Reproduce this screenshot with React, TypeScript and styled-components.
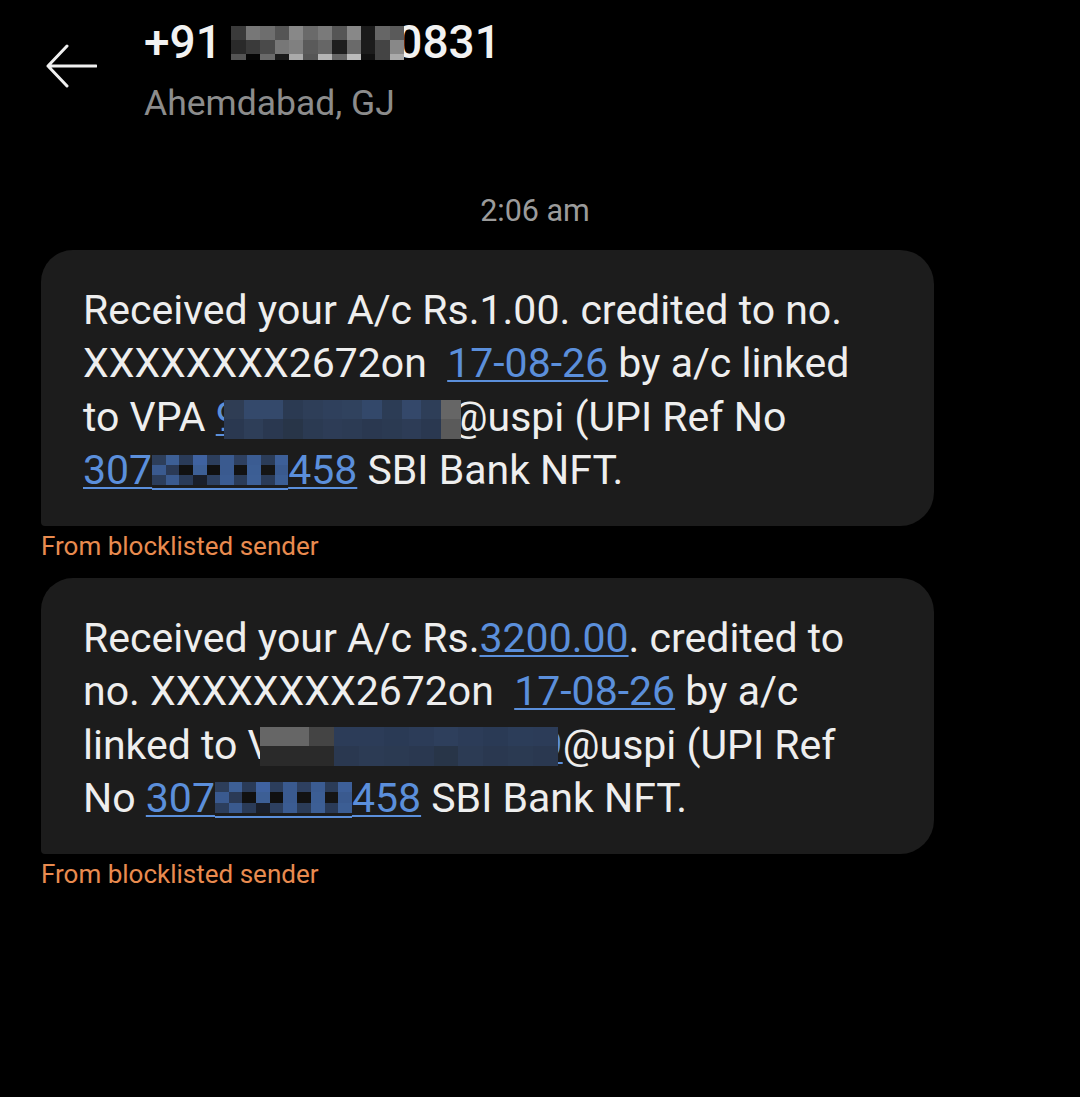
import React from "react";
import styled, { createGlobalStyle } from "styled-components";

const Global = createGlobalStyle`
  html, body { margin: 0; padding: 0; background: #000; }
  body { font-family: Roboto, "Noto Sans", "Liberation Sans", sans-serif; color: #eeeeee; }
  #root { min-height: 1097px; background: #000; }
`;

const Page = styled.div`
  width: 1080px;
  min-height: 1097px;
  background: #000;
  display: flex;
  flex-direction: column;
`;

const Header = styled.header`
  display: flex;
  align-items: flex-start;
  padding: 14px 0 0 45px;
  gap: 47px;
`;

const BackButton = styled.button`
  margin-top: 30px;
  width: 52px;
  height: 44px;
  padding: 0;
  border: 0;
  background: transparent;
  display: flex;
  align-items: center;
  justify-content: center;
  cursor: pointer;
`;

const Titles = styled.div`
  display: flex;
  flex-direction: column;
`;

const Title = styled.div`
  font-size: 46px;
  font-weight: 500;
  line-height: 56px;
  color: #f2f2f2;
  white-space: nowrap;
`;

const Subtitle = styled.div`
  margin-top: 8px;
  font-size: 35.5px;
  line-height: 50px;
  color: #8c8c8c;
`;

const Timestamp = styled.div`
  margin-top: 65px;
  text-align: center;
  font-size: 30.5px;
  line-height: 36px;
  color: #9b9b9b;
  padding-right: 10px;
`;

const Thread = styled.div`
  display: flex;
  flex-direction: column;
  padding-left: 41px;
  margin-top: 21px;
`;

const Bubble = styled.div`
  width: 893px;
  box-sizing: border-box;
  background: #1c1c1c;
  border-radius: 32px 34px 34px 4px;
  padding: 33.5px 30px 28.5px 42px;
  font-size: 41px;
  line-height: 53.5px;
  color: #eeeeee;
`;

const Line = styled.div`
  white-space: nowrap;
`;

const Link = styled.span`
  color: #5b8fdb;
  text-decoration: underline;
  text-decoration-thickness: 2px;
  text-underline-offset: 3px;
`;

const Note = styled.div`
  font-size: 26px;
  line-height: 40px;
  color: #e98b4f;
  margin-bottom: 12px;
`;

const MosaicBox = styled.span<{ $w: number; $h: number; $va: number; $ml: number; $mr: number; $ul?: boolean }>`
  display: inline-block;
  position: relative;
  z-index: 1;
  width: ${(p) => p.$w}px;
  height: ${(p) => p.$h}px;
  margin-left: ${(p) => p.$ml}px;
  margin-right: ${(p) => p.$mr}px;
  vertical-align: ${(p) => p.$va}px;
  ${(p) =>
    p.$ul
      ? `&::after {
    content: "";
    position: absolute;
    left: 0;
    right: 0;
    bottom: -5px;
    height: 2px;
    background: #5b8fdb;
  }`
      : ""}
`;

const MosaicGrid = styled.span<{ $cols: number; $rows: string }>`
  position: absolute;
  inset: 0;
  display: grid;
  grid-template-columns: repeat(${(p) => p.$cols}, 1fr);
  grid-template-rows: ${(p) => p.$rows};
`;

const Cell = styled.span<{ $c: string }>`
  background: ${(p) => p.$c};
`;

type MosaicProps = {
  w: number;
  h: number;
  rows: string;
  colors: string[][];
  va?: number;
  ml?: number;
  mr?: number;
  ul?: boolean;
};

const Mosaic = ({ w, h, rows, colors, va = 0, ml = 0, mr = 0, ul }: MosaicProps) => (
  <MosaicBox $w={w} $h={h} $va={va} $ml={ml} $mr={mr} $ul={ul}>
    <MosaicGrid $cols={colors[0].length} $rows={rows}>
      {colors.flatMap((r, i) => r.map((c, j) => <Cell key={`${i}-${j}`} $c={c} />))}
    </MosaicGrid>
  </MosaicBox>
);

const headerMosaic = [
  ["#3a3a3a", "#777777", "#6e6e6e", "#555555", "#888888", "#6a6a6a", "#7a7a7a", "#555555", "#888888", "#1a1a1a", "#666666", "#5a5a5a"],
  ["#2a2a2a", "#3a3a3a", "#4a4a4a", "#777777", "#808080", "#5a5a5a", "#666666", "#1e1e1e", "#6a6a6a", "#1c1c1c", "#444444", "#888888"],
  ["#555555", "#050505", "#6a6a6a", "#1a1a1a", "#aaaaaa", "#555555", "#b5b5b5", "#666666", "#bbbbbb", "#111111", "#444444", "#aaaaaa"],
];

const vpaMosaic1 = [
  ["#2f3d54", "#34496b", "#34496b", "#2b3a52", "#2e3e58", "#2f405c", "#30425e", "#33486a", "#2c3c55", "#34486a", "#2e3e58", "#666666"],
  ["#2a3850", "#2e3e58", "#2a3850", "#283548", "#2b3a52", "#2d3c56", "#2c3b54", "#2a3850", "#2b3a52", "#2d3c56", "#2a3850", "#5a5a5a"],
];

const refMosaic = [
  ["#2d3e5a", "#3d5f95", "#2a3b58", "#3f62a0", "#2c3e5c", "#3a5a8f", "#2e4060", "#3b5c92", "#2b3c58", "#3d5f98"],
  ["#3a5a8f", "#2b3a56", "#111111", "#3d5f95", "#101010", "#3a5a8f", "#121212", "#3c5e94", "#151515", "#3a5a8f"],
  ["#2c3e5c", "#3a5a8f", "#2a3b58", "#1a1f2a", "#2d4060", "#3b5c92", "#2b3c58", "#3d5f95", "#2a3b58", "#3c5e94"],
];

const vpaMosaic2 = [
  ["#666666", "#666666", "#444444", "#2c3c58", "#2c3c58", "#2a3a55", "#2c3c58", "#2e3f5c", "#2c3c58", "#2a3a55", "#2c3d59", "#2c3c58"],
  ["#2a2a2a", "#2a2a2a", "#2a2a2a", "#2a3850", "#2c3b54", "#2b3a52", "#2a3850", "#283548", "#2c3b54", "#2a3850", "#2b3a52", "#2a3850"],
];

const ArrowIcon = () => (
  <svg width="52" height="44" viewBox="0 0 52 44" fill="none">
    <path d="M3 22 H51 M22 2 L3 22 L22 42" stroke="#f0f0f0" strokeWidth="3" strokeLinecap="round" strokeLinejoin="round" />
  </svg>
);

export default function App() {
  return (
    <Page>
      <Global />
      <Header>
        <BackButton aria-label="Back">
          <ArrowIcon />
        </BackButton>
        <Titles>
          <Title>
            +91 <Mosaic w={173} h={34} rows="14fr 14fr 6fr" colors={headerMosaic} va={-2} ml={-2} mr={-8} />0831
          </Title>
          <Subtitle>Ahemdabad, GJ</Subtitle>
        </Titles>
      </Header>

      <Timestamp>2:06 am</Timestamp>

      <Thread>
        <Bubble>
          <Line>Received your A/c Rs.1.00. credited to no.</Line>
          <Line>
            XXXXXXXX2672on&nbsp; <Link>17-08-26</Link> by a/c linked
          </Line>
          <Line>
            to VPA <Link>9</Link>
            <Mosaic w={237} h={39} rows="1fr 1fr" colors={vpaMosaic1} va={-8} ml={-15} mr={-10} />
            @uspi (UPI Ref No
          </Line>
          <Line>
            <Link>
              307
              <Mosaic w={136} h={30} rows="1fr 1fr 1fr" colors={refMosaic} va={-1} ul />
              458
            </Link>{" "}
            SBI Bank NFT.
          </Line>
        </Bubble>
        <Note>From blocklisted sender</Note>

        <Bubble>
          <Line>
            Received your A/c Rs.<Link>3200.00</Link>. credited to
          </Line>
          <Line>
            no. XXXXXXXX2672on&nbsp; <Link>17-08-26</Link> by a/c
          </Line>
          <Line>
            linked to V
            <Mosaic w={298} h={39} rows="1fr 1fr" colors={vpaMosaic2} va={-7} ml={-14} mr={-18} />
            <Link>9</Link>@uspi (UPI Ref
          </Line>
          <Line>
            No{" "}
            <Link>
              307
              <Mosaic w={137} h={31} rows="1fr 1fr 1fr" colors={refMosaic} va={-1} ul />
              458
            </Link>{" "}
            SBI Bank NFT.
          </Line>
        </Bubble>
        <Note>From blocklisted sender</Note>
      </Thread>
    </Page>
  );
}
